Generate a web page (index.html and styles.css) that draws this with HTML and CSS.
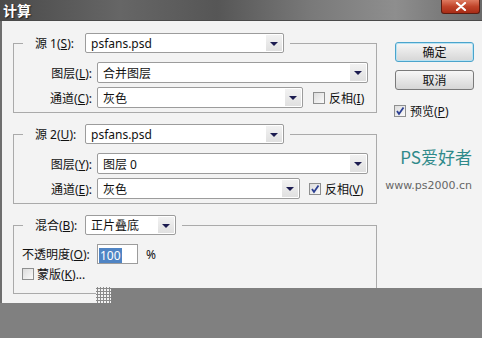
FILE: index.html
```html
<!DOCTYPE html>
<html lang="zh-CN">
<head>
    <meta charset="UTF-8">
    <title>计算</title>
    <link rel="stylesheet" href="styles.css">
</head>
<body>
    <div class="page">
        <div class="dialog">
            <div class="titlebar">
                <span class="title">计算</span>
                <span class="close">
                    <svg width="12" height="9" viewBox="0 0 12 9"><path d="M2 1 L10 8 M10 1 L2 8" stroke="#fff" stroke-width="2.2" stroke-linecap="round"/></svg>
                </span>
            </div>
            <div class="main">
                <div class="groups">
                    <fieldset class="group">
                        <legend><div class="legend-in"><span class="leg-label">源 1(<u>S</u>):</span><div class="select w-src">psfans.psd<i class="arrow"></i></div></div></legend>
                        <div class="rows">
                            <div class="row"><span class="label">图层(<u>L</u>):</span><div class="select w-full">合并图层<i class="arrow"></i></div></div>
                            <div class="row"><span class="label">通道(<u>C</u>):</span><div class="select w-mid">灰色<i class="arrow"></i></div><span class="check"><span class="box"></span><span>反相(<u>I</u>)</span></span></div>
                        </div>
                    </fieldset>
                    <fieldset class="group">
                        <legend><div class="legend-in"><span class="leg-label">源 2(<u>U</u>):</span><div class="select w-src">psfans.psd<i class="arrow"></i></div></div></legend>
                        <div class="rows">
                            <div class="row"><span class="label">图层(<u>Y</u>):</span><div class="select w-full">图层 0<i class="arrow"></i></div></div>
                            <div class="row"><span class="label">通道(<u>E</u>):</span><div class="select w-mid2">灰色<i class="arrow"></i></div><span class="check near"><span class="box checked"><svg width="10" height="10" viewBox="0 0 10 10"><path d="M2 5 L4 8 L8.5 1.5" fill="none" stroke="#2b3f92" stroke-width="1.8"/></svg></span><span>反相(<u>V</u>)</span></span></div>
                        </div>
                    </fieldset>
                    <fieldset class="group last">
                        <legend><div class="legend-in"><span class="leg-label">混合(<u>B</u>):</span><div class="select w-blend">正片叠底<i class="arrow"></i></div></div></legend>
                        <div class="rows blend">
                            <div class="row opacity"><span class="op-label">不透明度(<u>O</u>):</span><div class="input"><span class="sel">100</span></div><span class="pct">%</span></div>
                            <div class="row mask"><span class="check"><span class="box"></span><span>蒙版(<u>K</u>)...</span></span></div>
                        </div>
                    </fieldset>
                </div>
                <div class="side">
                    <button type="button" class="btn primary">确定</button>
                    <button type="button" class="btn">取消</button>
                    <span class="check preview"><span class="box checked"><svg width="10" height="10" viewBox="0 0 10 10"><path d="M2 5 L4 8 L8.5 1.5" fill="none" stroke="#2b3f92" stroke-width="1.8"/></svg></span><span>预览(<u>P</u>)</span></span>
                    <div class="logo">
                        <div class="logo-name">PS爱好者</div>
                        <div class="logo-url">www.ps2000.cn</div>
                    </div>
                </div>
            </div>
        </div>
        <div class="cover"></div>
        <div class="grip"></div>
    </div>
</body>
</html>
```

FILE: styles.css
```css
* {
    box-sizing: border-box;
}

body {
    margin: 0;
    background: #808080;
    font: 12px "Noto Sans", "Noto Sans CJK SC", sans-serif;
    color: #111;
}

.page {
    position: relative;
    width: 482px;
    height: 338px;
    overflow: hidden;
}

.dialog {
    height: 303px;
    background: #f3f3f3;
}

.titlebar {
    height: 21px;
    display: flex;
    justify-content: space-between;
    padding-left: 3px;
    background: linear-gradient(90deg, #4a4a4a 0%, #666 25%, #565656 45%, #7a7a7a 65%, #8e8e8e 82%, #6a6a6a 100%);
    border-bottom: 1px solid #4a4a4a;
}

.title {
    color: #fff;
    font: bold 14px "Noto Sans CJK SC", sans-serif;
    line-height: 20px;
    text-shadow: 1px 1px 1px #222;
}

.close {
    width: 39px;
    height: 14px;
    margin-right: 2px;
    display: flex;
    align-items: center;
    justify-content: center;
    background: linear-gradient(#de7a60, #c0442a 50%, #a82c16);
    border: 1px solid #5c1c10;
    border-top: none;
    border-radius: 0 0 3px 3px;
}

.main {
    display: flex;
    height: 282px;
    padding: 12px 0 0 11px;
    border-left: 2px solid #6e6e6e;
}

.groups {
    width: 364px;
    flex: none;
}

.group {
    margin: 0 0 11px;
    padding: 0 0 4px;
    min-width: 0;
    border: 1px solid #aaa;
}

.group legend {
    margin-left: 9px;
    padding: 0 6px 0 12px;
}

.legend-in {
    display: flex;
    align-items: center;
    gap: 5px;
    height: 20px;
}

.leg-label {
    width: 45px;
    white-space: nowrap;
}

.rows {
    display: flex;
    flex-direction: column;
    gap: 4px;
    padding-top: 9px;
}

.row {
    display: flex;
    align-items: center;
    gap: 5px;
    height: 21px;
}

.label {
    width: 78px;
    flex: none;
    text-align: right;
}

.select {
    position: relative;
    height: 100%;
    display: flex;
    align-items: center;
    padding-left: 5px;
    background: #fff;
    border: 1px solid #9c9c9c;
    border-radius: 2px;
    flex: none;
}

.legend-in .select {
    height: 20px;
}

.arrow {
    position: absolute;
    right: 1px;
    top: 1px;
    bottom: 1px;
    width: 16px;
    background: linear-gradient(#f2f2f2, #e0e0e0);
}

.arrow::after {
    content: "";
    position: absolute;
    left: 4px;
    top: 7px;
    border-left: 4px solid transparent;
    border-right: 4px solid transparent;
    border-top: 4px solid #1c1c50;
}

.w-src {
    width: 199px;
}

.w-full {
    width: 271px;
}

.w-mid {
    width: 206px;
}

.w-mid2 {
    width: 203px;
}

.w-blend {
    width: 91px;
}

.check {
    display: flex;
    align-items: center;
    gap: 4px;
    margin-left: 5px;
    white-space: nowrap;
}

.check.near {
    margin-left: 4px;
}

.box {
    width: 12px;
    height: 12px;
    display: flex;
    align-items: center;
    justify-content: center;
    border: 1px solid #8e8f8f;
    background: linear-gradient(135deg, #dcdcdc, #fafafa);
}

.last {
    padding-bottom: 12px;
}

.blend {
    gap: 2px;
}

.opacity {
    height: 20px;
    padding-left: 8px;
}

.op-label {
    width: 70px;
    white-space: nowrap;
}

.input {
    width: 41px;
    height: 20px;
    padding: 2px 0 0 1px;
    background: #fff;
    border: 1px solid #9c9c9c;
}

.sel {
    display: inline-block;
    height: 15px;
    padding: 0 1px;
    line-height: 15px;
    background: #4f84c4;
    color: #fff;
}

.pct {
    margin-left: 3px;
}

.mask {
    height: 15px;
    padding-left: 8px;
}

.mask .check {
    margin-left: 0;
    gap: 3px;
}

.side {
    display: flex;
    flex-direction: column;
    width: 80px;
    margin-left: 17px;
    padding-top: 9px;
}

.btn {
    width: 79px;
    height: 20px;
    margin: 0 0 8px 1px;
    padding: 0;
    font: inherit;
    color: #111;
    background: linear-gradient(#f7f7f7, #e6e6e6 50%, #d6d6d6);
    border: 1px solid #7a7a7a;
    border-radius: 3px;
}

.btn.primary {
    border-color: #4aa4cc;
    box-shadow: inset 0 0 0 1px #b9e2f2;
}

.preview {
    margin: 5px 0 0;
    height: 16px;
}

.logo {
    margin: 28px 0 0 -14px;
    width: 94px;
    text-align: right;
    padding-right: 2px;
}

.logo-name {
    font: 17px "Noto Sans CJK SC", sans-serif;
    line-height: 20px;
    color: #2f8a8a;
}

.logo-url {
    margin-top: 12px;
    font: 11px "DejaVu Sans", sans-serif;
    color: #666;
}

.cover {
    position: absolute;
    left: 111px;
    top: 288px;
    right: 0;
    bottom: 0;
    background: #808080;
}

.grip {
    position: absolute;
    left: 96px;
    top: 287px;
    width: 15px;
    height: 16px;
    background: radial-gradient(circle, #8a8a8a 1px, #f3f3f3 1.2px) 0 0 / 3px 3px;
}
```
